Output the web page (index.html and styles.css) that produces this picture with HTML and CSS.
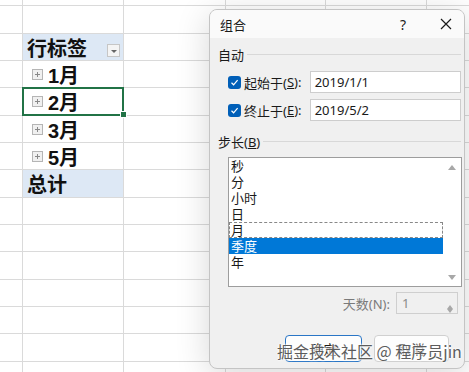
FILE: index.html
```html
<!DOCTYPE html>
<html lang="zh">
<head>
    <meta charset="UTF-8">
    <meta name="viewport" content="width=device-width, initial-scale=1.0">
    <title>组合</title>
    <link rel="stylesheet" href="styles.css">
</head>
<body>
    <div class="page">
        <div class="sheet">
            <div class="row top"></div>
            <div class="row tall"></div>
            <div class="row">
                <div class="cell head">行标签<span class="drop"></span></div>
            </div>
            <div class="row">
                <div class="cell"><span class="plus"></span>1月</div>
            </div>
            <div class="row tall">
                <div class="cell selected"><span class="plus"></span>2月</div>
            </div>
            <div class="row">
                <div class="cell"><span class="plus"></span>3月</div>
            </div>
            <div class="row">
                <div class="cell"><span class="plus"></span>5月</div>
            </div>
            <div class="row tall">
                <div class="cell head">总计</div>
            </div>
            <div class="row"></div>
            <div class="row"></div>
            <div class="row tall"></div>
            <div class="row"></div>
            <div class="row"></div>
            <div class="row tall"></div>
            <div class="row"></div>
        </div>

        <div class="dialog">
            <div class="titlebar">
                <span class="title">组合</span>
                <span class="help">?</span>
                <span class="close">
                    <svg width="12" height="12" viewBox="0 0 12 12"><path d="M1 1 L11 11 M11 1 L1 11" stroke="#1a1a1a" stroke-width="1.2" fill="none"/></svg>
                </span>
            </div>
            <div class="dlg-body">
                <div class="group">自动</div>
                <div class="field">
                    <label class="check"><span class="box"><svg width="9" height="9" viewBox="0 0 9 9"><path d="M1.5 4.8 L3.6 6.8 L7.6 2.2" stroke="#fff" stroke-width="1.2" fill="none"/></svg></span>起始于(<u>S</u>):</label>
                    <div class="text">2019/1/1</div>
                </div>
                <div class="field second">
                    <label class="check"><span class="box"><svg width="9" height="9" viewBox="0 0 9 9"><path d="M1.5 4.8 L3.6 6.8 L7.6 2.2" stroke="#fff" stroke-width="1.2" fill="none"/></svg></span>终止于(<u>E</u>):</label>
                    <div class="text">2019/5/2</div>
                </div>
                <div class="group step">步长(<u>B</u>)</div>
                <div class="list">
                    <ul class="items">
                        <li>秒</li>
                        <li>分</li>
                        <li>小时</li>
                        <li>日</li>
                        <li class="focus">月</li>
                        <li class="active">季度</li>
                        <li>年</li>
                    </ul>
                    <div class="scroll">
                        <span class="arrow up"></span>
                        <span class="arrow down"></span>
                    </div>
                </div>
                <div class="days">
                    <span class="days-label">天数(N):</span>
                    <div class="spin">
                        <span>1</span>
                        <div class="spin-arrows">
                            <span class="arrow up small"></span>
                            <span class="arrow down small"></span>
                        </div>
                    </div>
                </div>
                <div class="buttons">
                    <button class="btn default">确定</button>
                    <button class="btn">取消</button>
                </div>
            </div>
        </div>

        <div class="watermark">掘金技术社区 @ 程序员jin</div>
    </div>
</body>
</html>
```

FILE: styles.css
```css
body {
    margin: 0;
    padding: 0;
    background: #fff;
    font-family: "Noto Sans", "Noto Sans CJK SC", sans-serif;
}

.page {
    position: relative;
    width: 469px;
    height: 372px;
    overflow: hidden;
}

/* spreadsheet */
.sheet {
    height: 372px;
    background-color: #fff;
    background-image:
        linear-gradient(#dadada, #dadada),
        linear-gradient(#dadada, #dadada),
        linear-gradient(#dadada, #dadada),
        linear-gradient(#dadada, #dadada),
        linear-gradient(#dadada, #dadada);
    background-size: 1px 100%;
    background-repeat: no-repeat;
    background-position: 22px 0, 123px 0, 225px 0, 325px 0, 426px 0;
}

.row {
    box-sizing: border-box;
    height: 27px;
    border-bottom: 1px solid #dadada;
}

    .row.tall {
        height: 28px;
    }

    .row.top {
        height: 6px;
    }

.cell {
    position: relative;
    box-sizing: border-box;
    margin-left: 23px;
    width: 100px;
    height: 100%;
    padding-left: 4px;
    display: flex;
    align-items: center;
    font-family: "Liberation Sans", "Noto Sans CJK SC", sans-serif;
    font-size: 20px;
    font-weight: bold;
    color: #111;
}

    .cell.head {
        background: #dde8f5;
    }

    .cell.selected {
        outline: 2px solid #217346;
        outline-offset: -1px;
    }

        .cell.selected::after {
            content: "";
            position: absolute;
            right: -4px;
            bottom: -3px;
            width: 5px;
            height: 5px;
            background: #217346;
            border: 1px solid #fff;
        }

.drop {
    position: absolute;
    left: 84px;
    top: 10px;
    width: 11px;
    height: 11px;
    border: 1px solid #c6c6c6;
    background: #f4f4f4;
}

    .drop::after {
        content: "";
        position: absolute;
        left: 3px;
        top: 5px;
        border-left: 3px solid transparent;
        border-right: 3px solid transparent;
        border-top: 3px solid #666;
    }

.plus {
    position: relative;
    box-sizing: border-box;
    width: 11px;
    height: 11px;
    margin: 0 5px 0 5px;
    border: 1px solid #b5b5b5;
    background: #f0f0f0;
}

    .plus::before,
    .plus::after {
        content: "";
        position: absolute;
        background: #888;
    }

    .plus::before {
        left: 2px;
        top: 4px;
        width: 5px;
        height: 1px;
    }

    .plus::after {
        left: 4px;
        top: 2px;
        width: 1px;
        height: 5px;
    }

/* dialog */
.dialog {
    position: absolute;
    left: 209px;
    top: 9px;
    width: 256px;
    height: 360px;
    box-sizing: border-box;
    background: #f0f0f0;
    border: 1px solid #c4c4c4;
    border-radius: 8px;
    box-shadow: 0 6px 34px rgba(0, 0, 0, 0.16);
    font-size: 13px;
    color: #1a1a1a;
    overflow: hidden;
}

.titlebar {
    height: 28px;
    display: flex;
    align-items: center;
    background: #fafafa;
    padding-left: 10px;
}

.title {
    flex: 1;
}

.help {
    width: 40px;
    font-size: 14px;
}

.close {
    width: 24px;
    display: flex;
}

.dlg-body {
    padding: 0 3px 0 8px;
}

.group {
    display: flex;
    align-items: center;
    height: 17px;
    margin-top: 8px;
}

    .group::after {
        content: "";
        flex: 1;
        height: 1px;
        margin-left: 3px;
        background: #d8d8d8;
    }

    .group.step {
        margin-top: 12px;
    }

.field {
    display: flex;
    align-items: center;
    margin-top: 8px;
}

    .field.second {
        margin-top: 6px;
    }

.check {
    display: flex;
    align-items: center;
    width: 92px;
    padding-left: 10px;
    box-sizing: border-box;
}

.box {
    display: flex;
    align-items: center;
    justify-content: center;
    width: 13px;
    height: 13px;
    margin-right: 3px;
    border-radius: 3px;
    background: #005fb8;
}

.text {
    box-sizing: border-box;
    width: 152px;
    height: 22px;
    padding-left: 4px;
    line-height: 20px;
    background: #fff;
    border: 1px solid #cdcdcd;
}

.list {
    display: flex;
    box-sizing: border-box;
    width: 234px;
    height: 130px;
    margin: 7px 0 0 10px;
    background: #fff;
    border: 1px solid #9d9d9d;
}

.items {
    flex: 1;
    margin: 0;
    padding: 0;
    list-style: none;
}

    .items li {
        box-sizing: border-box;
        height: 16px;
        line-height: 16px;
        padding-left: 2px;
    }

        .items li.focus {
            border: 1px dashed #888;
            line-height: 14px;
            padding-left: 1px;
        }

        .items li.active {
            background: #0078d7;
            color: #fff;
        }

.scroll {
    width: 18px;
    display: flex;
    flex-direction: column;
    justify-content: space-between;
    align-items: center;
    padding: 7px 0 6px;
}

.arrow {
    width: 0;
    height: 0;
    border-left: 4px solid transparent;
    border-right: 4px solid transparent;
}

    .arrow.up {
        border-bottom: 5px solid #a8a8a8;
    }

    .arrow.down {
        border-top: 5px solid #a8a8a8;
    }

    .arrow.small {
        border-left-width: 3px;
        border-right-width: 3px;
    }

        .arrow.small.up {
            border-bottom-width: 4px;
        }

        .arrow.small.down {
            border-top-width: 4px;
        }

.days {
    display: flex;
    justify-content: flex-end;
    align-items: center;
    margin-top: 5px;
    padding-right: 3px;
}

.days-label {
    color: #7a7a7a;
    margin-right: 6px;
}

.spin {
    box-sizing: border-box;
    width: 62px;
    height: 22px;
    display: flex;
    align-items: center;
    padding-left: 5px;
    border: 1px solid #cfcfcf;
    color: #8a8a8a;
}

    .spin span:first-child {
        flex: 1;
    }

.spin-arrows {
    width: 14px;
    height: 100%;
    display: flex;
    flex-direction: column;
    justify-content: space-around;
    align-items: center;
}

.buttons {
    display: flex;
    margin-top: 21px;
    padding-left: 67px;
}

.btn {
    box-sizing: border-box;
    width: 80px;
    height: 27px;
    margin-right: 12px;
    font-family: "Noto Sans", "Noto Sans CJK SC", sans-serif;
    font-size: 13px;
    color: #1a1a1a;
    background: #fdfdfd;
    border: 1px solid #d0d0d0;
    border-radius: 4px;
}

    .btn.default {
        width: 82px;
        border-color: #2a76c6;
    }

/* watermark */
.watermark {
    position: absolute;
    left: 277px;
    top: 340px;
    font-family: "Noto Sans CJK SC", sans-serif;
    font-size: 16px;
    line-height: 22px;
    color: #5c5c5c;
    text-shadow: 0 0 2px #fff, 0 0 2px #fff, 0 0 3px #fff;
}
```
